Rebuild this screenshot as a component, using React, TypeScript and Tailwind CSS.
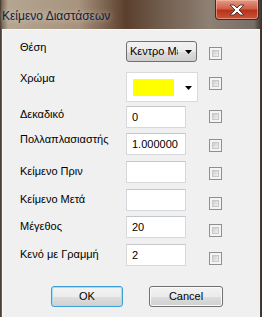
import React from 'react';

type Row = {
  label: string;
  value?: string;
  kind: 'combo' | 'color' | 'text';
  rowClass: string;
  labelPad: string;
  boxPad: string;
};

const rows: Row[] = [
  { label: 'Θέση', value: 'Κεντρο Με', kind: 'combo', rowClass: 'mt-[11px] h-[21px]', labelPad: 'pt-0', boxPad: 'pt-[6px]' },
  { label: 'Χρώμα', kind: 'color', rowClass: 'mt-[10px] h-[30px]', labelPad: 'pt-0', boxPad: 'pt-[5px]' },
  { label: 'Δεκαδικό', value: '0', kind: 'text', rowClass: 'mt-[4px] h-[22px]', labelPad: 'pt-[2px]', boxPad: 'pt-[4px]' },
  { label: 'Πολλαπλασιαστής', value: '1.000000', kind: 'text', rowClass: 'mt-[5px] h-[22px]', labelPad: 'pt-0', boxPad: 'pt-[6px]' },
  { label: 'Κείμενο Πριν', value: '', kind: 'text', rowClass: 'mt-[6px] h-[22px]', labelPad: 'pt-[4px]', boxPad: 'pt-[6px]' },
  { label: 'Κείμενο Μετά', value: '', kind: 'text', rowClass: 'mt-[6px] h-[22px]', labelPad: 'pt-[4px]', boxPad: 'pt-[8px]' },
  { label: 'Μέγεθος', value: '20', kind: 'text', rowClass: 'mt-[5px] h-[22px]', labelPad: 'pt-[4px]', boxPad: 'pt-[8px]' },
  { label: 'Κενό με Γραμμή', value: '2', kind: 'text', rowClass: 'mt-[6px] h-[22px]', labelPad: 'pt-[4px]', boxPad: 'pt-[8px]' },
];

function Arrow() {
  return (
    <svg width="7" height="4" viewBox="0 0 7 4">
      <path d="M0 0h7L3.5 4z" fill="#000" />
    </svg>
  );
}

function CheckBox() {
  return (
    <div className="w-[13px] h-[13px] border border-[#8f8f8f] bg-[#f4f4f4] p-[2px]">
      <div className="w-full h-full border border-[#c8c8c8] bg-[linear-gradient(135deg,#cdcdcd,#f0f0f0)]" />
    </div>
  );
}

function Control({ row }: { row: Row }) {
  if (row.kind === 'combo') {
    return (
      <div className="w-[71px] h-[21px] rounded-[3px] border border-[#707070] bg-[linear-gradient(#f2f2f2_0%,#ebebeb_50%,#dddddd_51%,#cfcfcf_100%)] flex items-center pl-[3px] pr-[4px] overflow-hidden">
        <span className="w-[48px] shrink-0 overflow-hidden whitespace-nowrap text-black">{row.value}</span>
        <div className="ml-auto flex items-center">
          <Arrow />
        </div>
      </div>
    );
  }
  if (row.kind === 'color') {
    return (
      <div className="w-[72px] h-[30px] border border-[#dadada] bg-white flex items-center pl-[6px] pr-[5px]">
        <div className="w-[41px] h-[17px] bg-[#ffff00]" />
        <div className="ml-auto flex items-center pt-[1px]">
          <Arrow />
        </div>
      </div>
    );
  }
  return (
    <div className="w-[60px] h-[22px] border border-[#d5d8dd] border-t-[#c4c7cc] bg-white flex items-center pl-[5px] text-black">
      {row.value}
    </div>
  );
}

function Button({ label, primary }: { label: string; primary?: boolean }) {
  return (
    <div
      className={
        primary
          ? 'w-[72px] h-[21px] rounded-[3px] border border-[#3c9fd8] shadow-[inset_0_0_0_1px_#a8dcf5] bg-[linear-gradient(#f3f3f3_0%,#ececec_50%,#dedede_51%,#d0d0d0_100%)] flex items-center justify-center text-black'
          : 'w-[74px] h-[21px] rounded-[3px] border border-[#707070] shadow-[inset_0_0_0_1px_#fbfbfb] bg-[linear-gradient(#f2f2f2_0%,#ebebeb_50%,#dddddd_51%,#cfcfcf_100%)] flex items-center justify-center text-black'
      }
    >
      {label}
    </div>
  );
}

export default function App() {
  return (
    <div className="w-[262px] h-[317px] overflow-hidden flex flex-col bg-[linear-gradient(90deg,#3d322b_0px,#7a6a5a_2px,#b4a591_8px,#a7937e_30%,#5b3f2d_48%,#6f5a49_60%,#8d8074_80%,#786e67_97%,#3a302a_100%)] font-['Liberation_Sans',Arial,sans-serif] text-[11px]">
      {/* title bar */}
      <div className="h-[29px] flex items-start relative">
        <span className="mt-[7px] ml-[2px] text-[12px] text-[#10213f] [text-shadow:0_0_6px_rgba(255,240,220,0.7)]">
          Κείμενο Διαστάσεων
        </span>
        <div className="absolute left-[215px] top-0 w-[44px] h-[20px] rounded-b-[4px] border border-t-0 border-[#4a2620] bg-[linear-gradient(#e49a86_0%,#cf6149_45%,#b9321c_55%,#c8563b_100%)] shadow-[inset_0_0_0_1px_rgba(255,200,180,0.5)] flex items-center justify-center">
          <svg width="16" height="12" viewBox="0 0 16 12">
            <path
              d="M1 1h4l3 3 3-3h4l-5 5 5 5h-4l-3-3-3 3H1l5-5z"
              fill="#ffffff"
              stroke="#5a3a36"
              strokeWidth="1"
              strokeLinejoin="round"
            />
          </svg>
        </div>
      </div>

      {/* client area */}
      <div className="ml-[2px] mr-[2px] flex-1 bg-[#f0f0f0] border-t border-l border-[#fafafa] flex flex-col">
        {rows.map((row, i) => (
          <div key={i} className={`flex items-start ${row.rowClass}`}>
            <div className={`w-[123px] pl-[17px] leading-[13px] text-black ${row.labelPad}`}>{row.label}</div>
            <div className="w-[83px] shrink-0">
              <Control row={row} />
            </div>
            <div className={row.boxPad}>
              <CheckBox />
            </div>
          </div>
        ))}

        <div className="mt-[20px] flex items-start">
          <div className="ml-[48px]">
            <Button label="OK" primary />
          </div>
          <div className="ml-[26px]">
            <Button label="Cancel" />
          </div>
        </div>
      </div>
    </div>
  );
}
